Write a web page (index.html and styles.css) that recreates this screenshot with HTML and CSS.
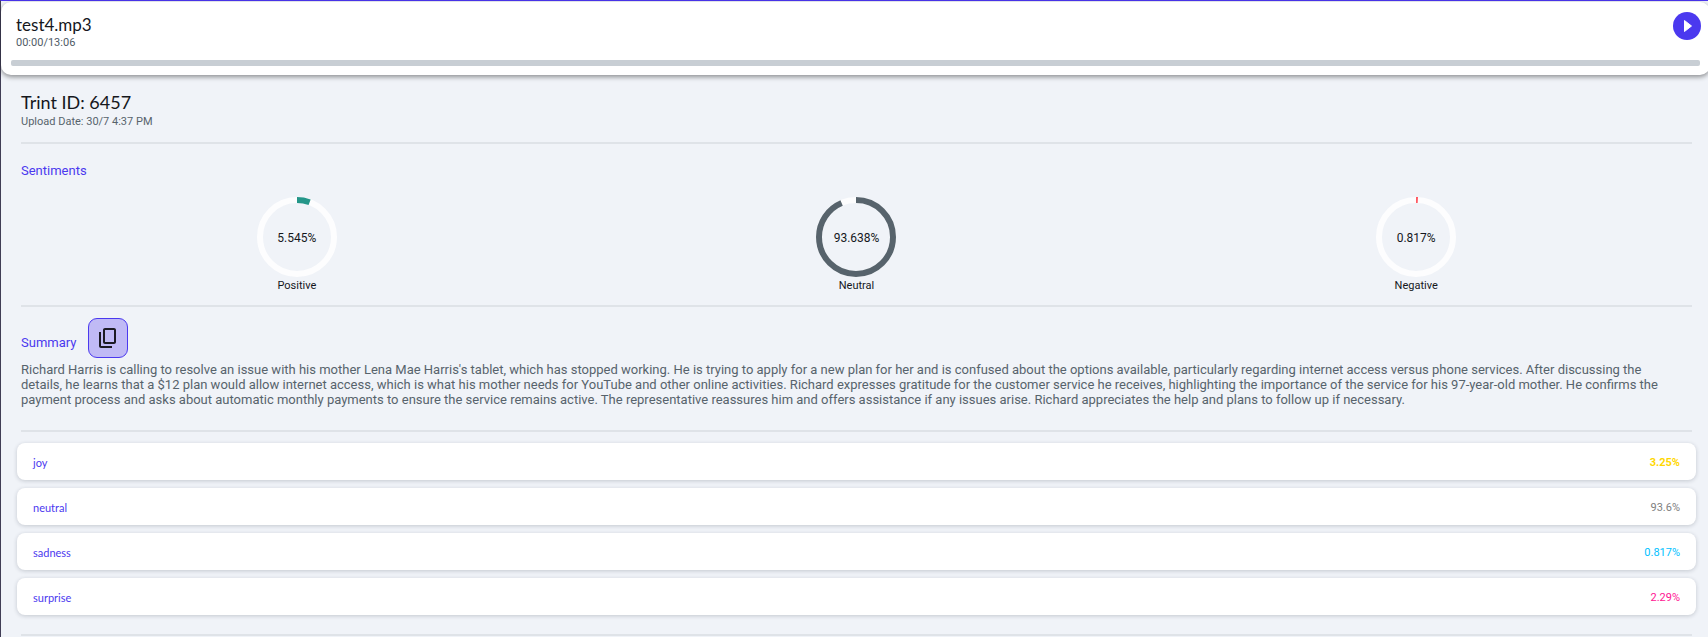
FILE: index.html
```html
<!DOCTYPE html>
<html lang="en">
<head>
<meta charset="utf-8">
<meta name="viewport" content="width=device-width, initial-scale=1">
<title>test4.mp3</title>
<link rel="stylesheet" href="styles.css">
</head>
<body>
<main class="panel">
  <header class="player">
    <div class="player-top">
      <div>
        <h1 class="file-name">test4.mp3</h1>
        <p class="file-time">00:00/13:06</p>
      </div>
      <button class="play" type="button" aria-label="Play">
        <svg viewBox="0 0 28 28" width="28" height="28" aria-hidden="true"><path d="M11.5 8.5v11l7-5.500z" fill="#fff" stroke="#fff" stroke-width="1" stroke-linejoin="round"/></svg>
      </button>
    </div>
    <div class="track" role="progressbar" aria-label="Playback" aria-valuemin="0" aria-valuemax="786" aria-valuenow="0"></div>
  </header>

  <section class="block intro">
    <h2 class="record-id">Trint ID: 6457</h2>
    <p class="record-date">Upload Date: 30/7 4:37 PM</p>
  </section>

  <section class="block sentiments">
    <h3 class="label">Sentiments</h3>
    <div class="rings">
      <figure class="ring">
        <div class="dial">
          <svg viewBox="0 0 80 80" aria-hidden="true"><circle class="base" cx="40" cy="40" r="37"/><circle class="arc positive" cx="40" cy="40" r="37" pathLength="100" stroke-dasharray="5.545 100"/></svg>
          <span class="amount">5.545%</span>
        </div>
        <figcaption class="caption">Positive</figcaption>
      </figure>
      <figure class="ring">
        <div class="dial">
          <svg viewBox="0 0 80 80" aria-hidden="true"><circle class="base" cx="40" cy="40" r="37"/><circle class="arc neutral" cx="40" cy="40" r="37" pathLength="100" stroke-dasharray="93.638 100"/></svg>
          <span class="amount">93.638%</span>
        </div>
        <figcaption class="caption">Neutral</figcaption>
      </figure>
      <figure class="ring">
        <div class="dial">
          <svg viewBox="0 0 80 80" aria-hidden="true"><circle class="base" cx="40" cy="40" r="37"/><circle class="arc negative" cx="40" cy="40" r="37" pathLength="100" stroke-dasharray="0.817 100"/></svg>
          <span class="amount">0.817%</span>
        </div>
        <figcaption class="caption">Negative</figcaption>
      </figure>
    </div>
  </section>

  <section class="block summary">
    <div class="summary-head">
      <h3 class="label">Summary</h3>
      <button class="copy" type="button" aria-label="Copy summary">
        <svg viewBox="0 0 24 24" width="24" height="24" aria-hidden="true"><path fill="#1c1b24" d="M18 2H9c-1.100 0-2 .9-2 2v12c0 1.100.9 2 2 2h9c1.100 0 2-.9 2-2V4c0-1.100-.9-2-2-2zm0 14H9V4h9v12zM3 6h2v14h11v2H5c-1.100 0-2-.9-2-2V6z"/></svg>
      </button>
    </div>
    <p class="summary-text">Richard Harris is calling to resolve an issue with his mother Lena Mae Harris's tablet, which has stopped working. He is trying to apply for a new plan for her and is confused about the options available, particularly regarding internet access versus phone services. After discussing the details, he learns that a $12 plan would allow internet access, which is what his mother needs for YouTube and other online activities. Richard expresses gratitude for the customer service he receives, highlighting the importance of the service for his 97-year-old mother. He confirms the payment process and asks about automatic monthly payments to ensure the service remains active. The representative reassures him and offers assistance if any issues arise. Richard appreciates the help and plans to follow up if necessary.</p>
  </section>

  <section class="emotions">
    <ul class="emotion-list">
      <li class="emotion"><span class="name">joy</span><span class="score joy">3.25%</span></li>
      <li class="emotion"><span class="name">neutral</span><span class="score calm">93.6%</span></li>
      <li class="emotion"><span class="name">sadness</span><span class="score sad">0.817%</span></li>
      <li class="emotion"><span class="name">surprise</span><span class="score surprise">2.29%</span></li>
    </ul>
    <hr class="rule">
  </section>
</main>
</body>
</html>
```
FILE: styles.css
```css
* { box-sizing: border-box; }
body {
  margin: 0;
  background: #f0f3f8;
  color: #15171c;
  font-family: Roboto, "Noto Sans", sans-serif;
  overflow-x: hidden;
}
h1, h2, h3, p, ul, figure { margin: 0; padding: 0; font-weight: 400; }
button { padding: 0; font: inherit; cursor: pointer; }
.panel { padding-top: 1px; border-top: 1px solid #4b35ef; border-left: 1px solid #403d55; }

.player {
  margin-right: -2px;
  padding: 10px 9px 9px 10px;
  background: #fff;
  border-radius: 10px;
  box-shadow: 0 2px 5px rgba(0, 0, 0, .42);
}
.player-top { display: flex; justify-content: space-between; height: 48px; padding-left: 5px; }
.file-name { padding-top: 1px; font-family: Lato, sans-serif; font-size: 17px; line-height: 24px; }
.file-time { font-size: 11px; line-height: 12px; color: #4f5b66; }
.play {
  width: 28px;
  height: 28px;
  border: 0;
  border-radius: 50%;
  background: #4b39ef;
}
.play svg { display: block; }
.track { height: 6px; margin-right: 1px; border-radius: 2px; background: #c8ced4; }

.block { margin: 0 16px 0 20px; border-bottom: 2px solid #dfe3e8; }
.intro { padding: 15px 0 14px; }
.record-id { font-family: Lato, sans-serif; font-size: 18px; line-height: 24px; }
.record-date { padding-top: 2px; font-size: 11px; line-height: 12px; color: #57636c; }

.label { font-size: 13px; line-height: 16px; color: #4b39ef; }
.sentiments { padding: 19px 0 11px; }
.rings { display: grid; grid-template-columns: repeat(3, 1fr); margin: 18px -4px 0; }
.ring { display: flex; flex-direction: column; align-items: center; }
.dial { display: grid; place-items: center; width: 80px; height: 80px; }
.dial > * { grid-area: 1 / 1; }
.dial svg { width: 80px; height: 80px; transform: rotate(-90deg); }
.dial circle { fill: none; stroke-width: 6; }
.base { stroke: #fdfdfe; }
.positive { stroke: #249689; }
.neutral { stroke: #57636c; }
.negative { stroke: #ff5963; }
.amount { padding-top: 1px; font-size: 12px; line-height: 16px; }
.caption { font-size: 11px; line-height: 14px; padding: 2px 0 1px; }

.summary { padding: 11px 0 23px; }
.summary-head { display: flex; align-items: flex-end; gap: 12px; }
.summary-head .label { padding-bottom: 7px; }
.copy {
  display: grid;
  place-items: center;
  width: 40px;
  height: 40px;
  border: 1px solid #4b39ef;
  border-radius: 9px;
  background: #c0baf5;
}
.summary-text { padding: 4px 16px 0 0; font-size: 13px; line-height: 15px; color: #57636c; }

.emotions { padding: 11px 12px 1px 16px; }
.emotion-list { display: grid; gap: 8px; list-style: none; }
.emotion {
  display: flex;
  align-items: center;
  justify-content: space-between;
  height: 37px;
  padding: 2px 16px 0;
  border-radius: 8px;
  background: #fff;
  box-shadow: 0 1px 4px rgba(20, 30, 50, .2);
}
.name { font-family: Lato, sans-serif; font-size: 11px; line-height: 14px; color: #4b39ef; }
.score { font-size: 11px; }
.joy { color: #ffd700; font-weight: 700; }
.calm { color: #808080; }
.sad { color: #00bfff; }
.surprise { color: #ff1493; }
.rule { margin: 19px 4px 0; border: 0; border-top: 2px solid #dfe3e8; }
```
